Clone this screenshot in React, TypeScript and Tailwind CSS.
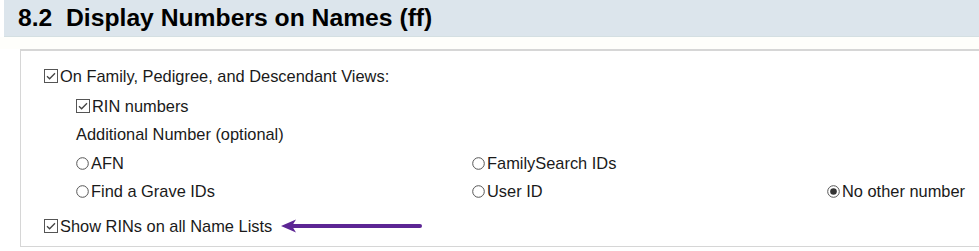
import React from 'react';

const Check: React.FC = () => (
    <svg className="w-[14px] h-[14px] mr-[2px] shrink-0" viewBox="0 0 14 14">
        <rect x="0.5" y="0.5" width="13" height="13" fill="#fff" stroke="#555" strokeWidth="1" />
        <path d="M3 7.2l2.6 2.6L11 4.2" fill="none" stroke="#444" strokeWidth="1.3" />
    </svg>
);

const Radio: React.FC<{ on?: boolean }> = ({ on }) => (
    <svg className="w-[13px] h-[13px] mr-[2px] shrink-0" viewBox="0 0 13 13">
        <circle cx="6.5" cy="6.5" r="5.8" fill="#fff" stroke="#555" strokeWidth="1" />
        {on && <circle cx="6.5" cy="6.5" r="3.3" fill="#333" />}
    </svg>
);

const Arrow: React.FC = () => (
    <svg className="ml-[7px] w-[144px] h-[16px]" viewBox="0 0 144 16">
        <path d="M2 8L17 1.5L13 8L17 14.5Z" fill="#5c2594" />
        <path d="M12 8H141" stroke="#5c2594" strokeWidth="4" strokeLinecap="round" />
    </svg>
);

const App: React.FC = () => {
    return (
        <div className="w-[979px] h-[251px] bg-white overflow-hidden font-['Liberation_Sans',Arial,sans-serif] text-[#1a1a1a]">
            <div className="ml-[4px] h-[37px] bg-[#dce5ec] border-b border-[#d4dfe2] pl-[14px] flex items-center">
                <h1 className="text-[24.7px] font-bold text-black whitespace-pre leading-none">8.2  Display Numbers on Names (ff)</h1>
            </div>
            <div className="h-[12px] bg-[#fefefb]" />
            <div className="ml-[20px] h-[198px] border-t-2 border-l border-b border-[#d6d6d6] pl-[23px] text-[16.4px]">
                <div className="flex items-center h-[18px] mt-[16px]">
                    <Check />On Family, Pedigree, and Descendant Views:
                </div>
                <div className="pl-[32px]">
                    <div className="flex items-center h-[18px] mt-[12px]">
                        <Check />RIN numbers
                    </div>
                    <div className="h-[18px] mt-[10px] flex items-center">Additional Number (optional)</div>
                    <div className="grid grid-cols-[396px_355px_1fr] gap-y-[10px] mt-[11px]">
                        <div className="flex items-center h-[18px]"><Radio />AFN</div>
                        <div className="flex items-center h-[18px]"><Radio />FamilySearch IDs</div>
                        <div />
                        <div className="flex items-center h-[18px]"><Radio />Find a Grave IDs</div>
                        <div className="flex items-center h-[18px]"><Radio />User ID</div>
                        <div className="flex items-center h-[18px]"><Radio on />No other number</div>
                    </div>
                </div>
                <div className="flex items-center h-[18px] mt-[17px]">
                    <Check />Show RINs on all Name Lists<Arrow />
                </div>
            </div>
        </div>
    );
};

export default App;
